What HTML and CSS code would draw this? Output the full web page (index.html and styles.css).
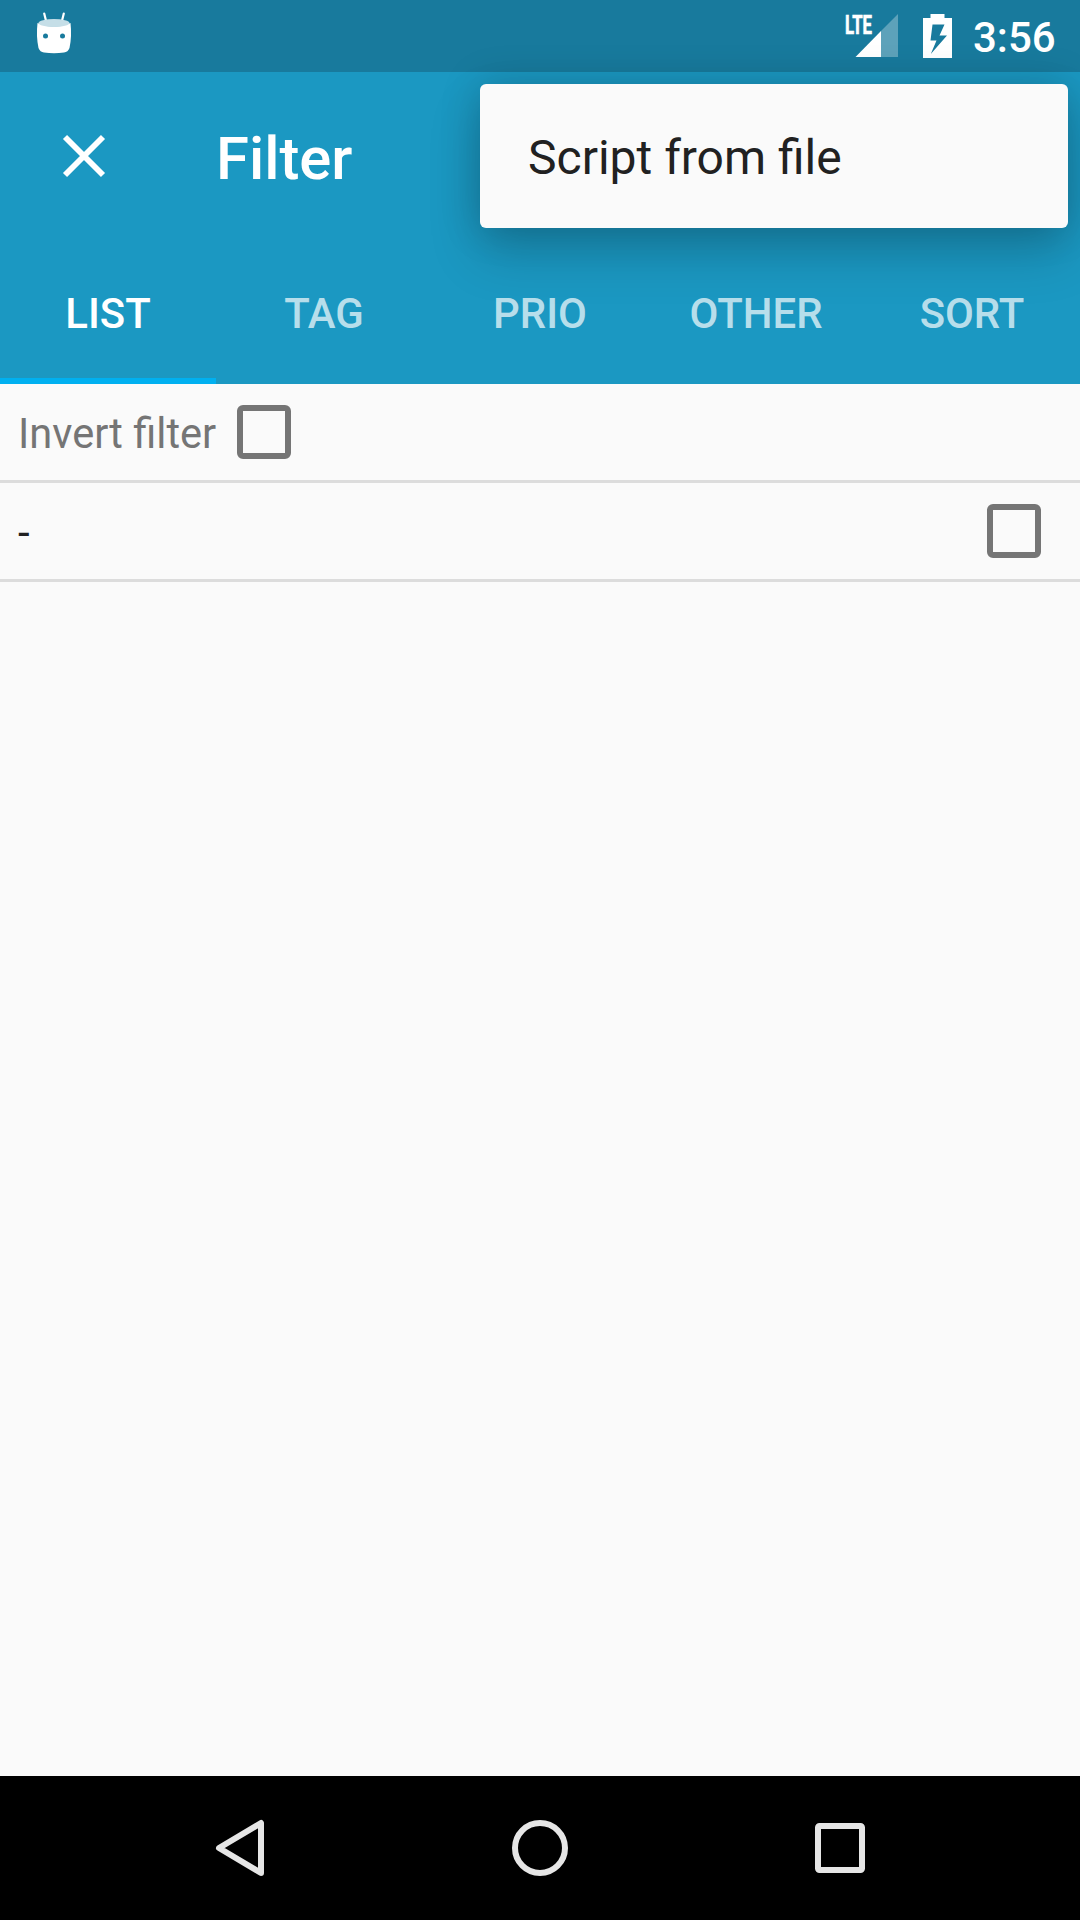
FILE: index.html
```html
<!DOCTYPE html>
<html lang="en">
<head>
<meta charset="utf-8">
<title>Filter</title>
<link rel="stylesheet" href="styles.css">
</head>
<body>
<div class="screen">
  <header class="status-bar">
    <svg class="status-droid" width="36" height="44" viewBox="0 0 36 44">
      <path d="M8.2 1.5l2 8M27.8 1.5l-2 8" stroke="#fff" stroke-width="2.2" stroke-linecap="round"/>
      <path d="M1.5 11Q18 18 34.5 11Q36 24 33.5 36Q32 40 28 40.5Q18 42 8 40.5Q4 40 2.500 36Q0 24 1.500 11Z" fill="#fff"/>
      <ellipse cx="18" cy="11" rx="15.500" ry="4" fill="#c5dee7"/>
      <circle cx="9.500" cy="24" r="2.500" fill="#187a9d"/>
      <circle cx="26.500" cy="24" r="2.500" fill="#187a9d"/>
    </svg>
    <svg class="status-signal" width="54" height="44" viewBox="0 0 54 44">
      <path d="M53 0v43H36V17Z" fill="#fff" fill-opacity=".3"/>
      <path d="M36 17v26H10.500Z" fill="#fff"/>
      <text class="network" x="0" y="19.500" textLength="27" lengthAdjust="spacingAndGlyphs">LTE</text>
    </svg>
    <svg class="status-battery" width="29" height="44" viewBox="0 0 29 44">
      <path fill-rule="evenodd" fill="#fff" d="M7.500 0h14v4H29v40H0V4h7.500ZM9.500 10.500L7.500 26.500h6L7.800 40 24 21.500h-7.500l5-11Z"/>
    </svg>
    <span class="clock">3:56</span>
  </header>
  <div class="toolbar">
    <svg class="close" width="44" height="44" viewBox="0 0 44 44">
      <path d="M3 3L41 41M41 3L3 41" stroke="#fff" stroke-width="5.800"/>
    </svg>
    <h1 class="title">Filter</h1>
    <div class="popup-menu">Script from file</div>
  </div>
  <nav class="tabs">
    <span class="tab tab-active">LIST</span>
    <span class="tab">TAG</span>
    <span class="tab">PRIO</span>
    <span class="tab">OTHER</span>
    <span class="tab">SORT</span>
  </nav>
  <main class="content">
    <div class="row row-invert"><span class="label">Invert filter</span><span class="checkbox"></span></div>
    <div class="row row-item"><span class="item">-</span><span class="checkbox"></span></div>
  </main>
  <footer class="nav-bar">
    <svg width="60" height="60" viewBox="0 0 60 60"><path d="M51 5v50L9 30Z"/></svg>
    <svg width="60" height="60" viewBox="0 0 60 60"><circle cx="30" cy="30" r="25"/></svg>
    <svg width="60" height="60" viewBox="0 0 60 60"><rect x="8" y="8" width="44" height="44" rx="1.500"/></svg>
  </footer>
</div>
</body>
</html>
```
FILE: styles.css
```css
* { box-sizing: border-box; }
body { margin: 0; font-family: Roboto, sans-serif; }
svg { display: block; flex: none; overflow: visible; }
.screen {
  width: 1080px;
  height: 1920px;
  display: flex;
  flex-direction: column;
  overflow: hidden;
  background: #fafafa;
}
.status-bar {
  height: 72px;
  display: flex;
  align-items: flex-start;
  padding: 0 24px 0 36px;
  background: #187a9d;
  color: #fff;
}
.status-droid { margin-top: 12px; }
.status-signal { margin: 14px 0 0 auto; }
.status-battery { margin: 14px 0 0 24px; }
.network {
  font-size: 25px;
  font-weight: 700;
  fill: #fff;
  stroke: #fff;
  stroke-width: .7;
}
.clock {
  width: 83px;
  margin-left: 21px;
  font-size: 42px;
  font-weight: 500;
  line-height: 76px;
}
.toolbar {
  position: relative;
  height: 168px;
  display: flex;
  align-items: center;
  padding-left: 62px;
  background: #1b98c2;
  color: #fff;
}
.title {
  margin: 5px 0 0 110px;
  font-size: 59.8px;
  font-weight: 500;
  line-height: 70px;
}
.popup-menu {
  position: absolute;
  z-index: 1;
  top: 12px;
  right: 12px;
  width: 588px;
  height: 144px;
  padding-left: 48px;
  border-radius: 6px;
  background: #fafafa;
  box-shadow: 0 26px 52px rgba(0, 0, 0, .18), 0 0 40px rgba(0, 0, 0, .18);
  color: #212121;
  font-size: 48px;
  line-height: 148px;
}
.tabs {
  height: 144px;
  display: grid;
  grid-template-columns: repeat(5, 1fr);
  background: #1b98c2;
}
.tab {
  height: 144px;
  padding-top: 6px;
  border-bottom: 6px solid transparent;
  color: rgba(255, 255, 255, .7);
  font-size: 41.9px;
  font-weight: 500;
  line-height: 136px;
  text-align: center;
}
.tab-active { border-color: #00b0f0; color: #fff; }
.content { flex: 1; }
.row {
  display: flex;
  align-items: center;
  border-bottom: 3px solid #dcdcdc;
  padding-left: 18px;
  font-size: 42px;
  color: #212121;
}
.row-invert { height: 99px; color: #757575; }
.row-item { height: 99px; justify-content: space-between; padding-right: 39px; }
.label { width: 219px; padding-top: 2px; font-size: 41.6px; }
.item { padding-top: 2px; }
.checkbox {
  width: 54px;
  height: 54px;
  border: 6px solid #757575;
  border-radius: 6px;
}
.nav-bar {
  height: 144px;
  display: flex;
  align-items: center;
  justify-content: center;
  gap: 240px;
  background: #000;
}
.nav-bar svg { fill: none; stroke: #e6e6e6; stroke-width: 6; stroke-linejoin: round; }
```
